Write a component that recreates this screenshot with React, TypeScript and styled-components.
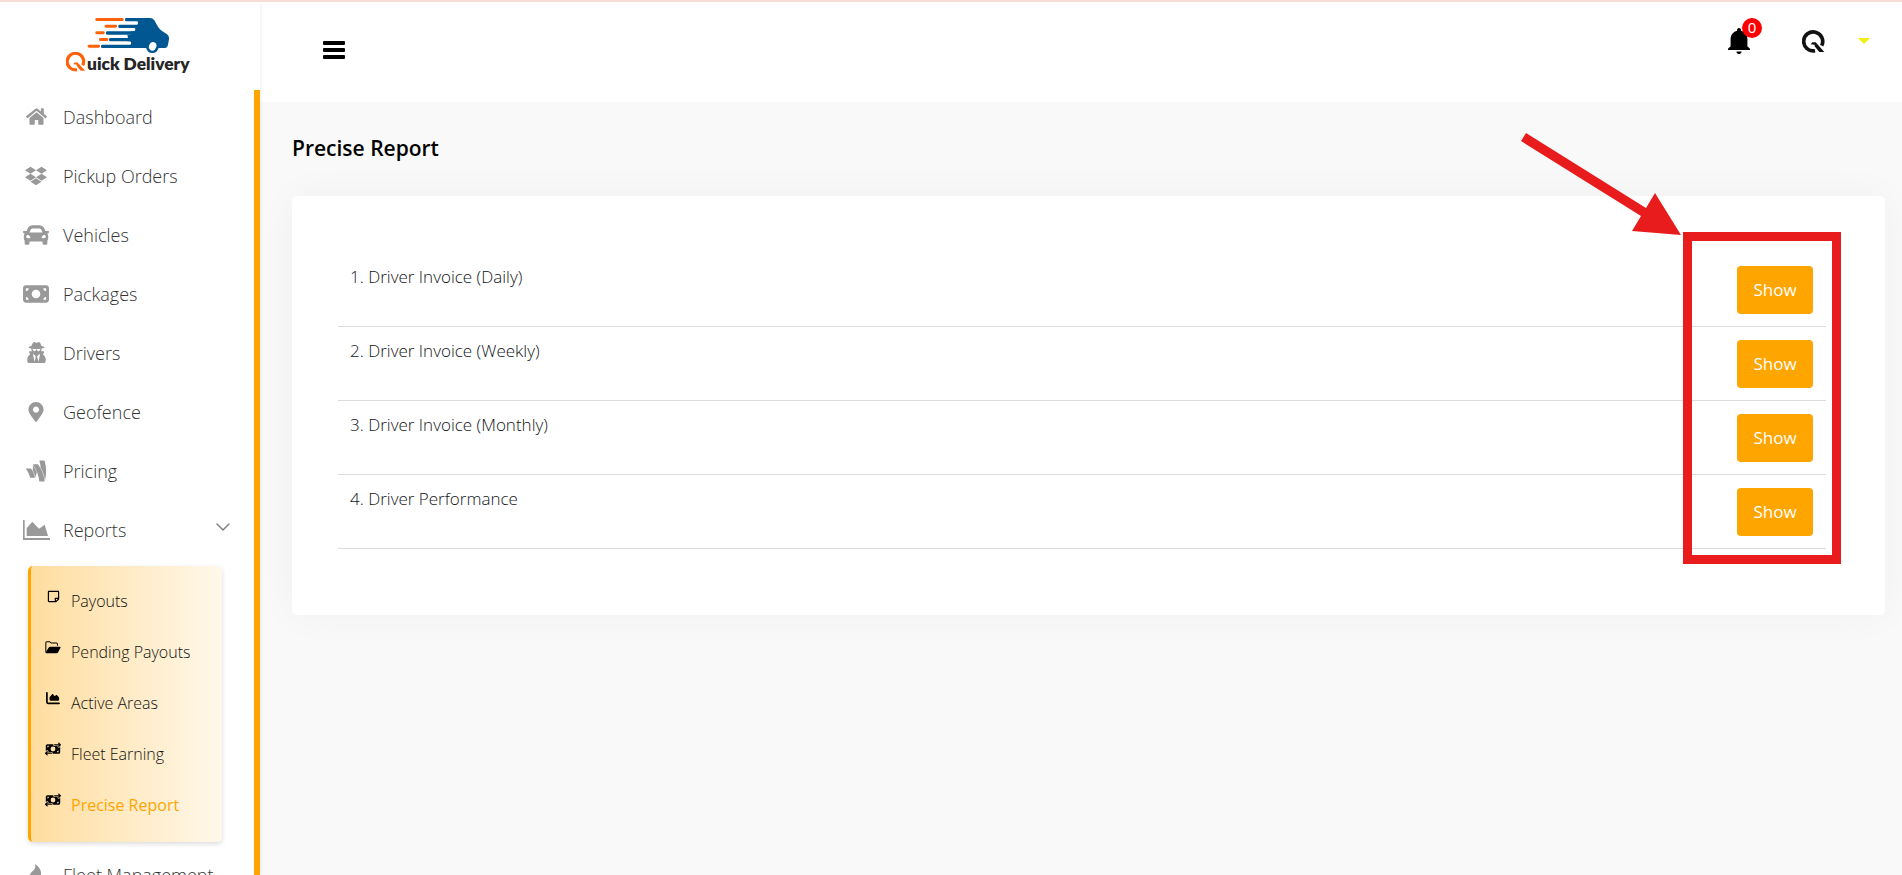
import React from "react";
import styled, { createGlobalStyle, css } from "styled-components";
import {
  FaHome,
  FaDropbox,
  FaCar,
  FaUserSecret,
  FaMapMarkerAlt,
  FaGoogleWallet,
  FaRegStickyNote,
} from "react-icons/fa";
import { FaMoneyBill, FaChartArea, FaMoneyBillTransfer } from "react-icons/fa6";
import { IoMdNotifications } from "react-icons/io";
import { BsChevronDown } from "react-icons/bs";

const orange = "#ffa500";

const GlobalStyle = createGlobalStyle`
  *, *::before, *::after { box-sizing: border-box; }
  body {
    margin: 0;
    background: #f9f9f9;
    color: #111417;
    font-family: "Open Sans", "Noto Sans", sans-serif;
    font-size: 17px;
    font-weight: 300;
    line-height: 24px;
  }
  button { font: inherit; cursor: pointer; }
  a { color: inherit; text-decoration: none; }
  ul { list-style: none; margin: 0; padding: 0; }
`;

const Page = styled.div`
  display: flex;
  height: 100vh;
  overflow: hidden;
  border-top: 2px solid #f6ddd5;
`;

const Sidebar = styled.aside`
  display: flex;
  flex-direction: column;
  flex: 0 0 260px;
  background: #fff;
  box-shadow: 0 0 4px rgba(0, 0, 0, 0.1);
  z-index: 1;
`;

const LogoLink = styled.a`
  flex: 0 0 88px;
  padding: 16px 0 0 66px;
`;

const NavScroll = styled.nav`
  flex: 1;
  min-height: 0;
  overflow: hidden;
  border-right: 6px solid ${orange};
`;

const NavLink = styled.a`
  display: flex;
  align-items: center;
  height: 59px;
  padding: 0 23px 6px 20px;
  gap: 11px;
  color: #333;
  font-size: 18px;
  white-space: nowrap;
`;

const NavIcon = styled.span<{ $size: number }>`
  display: flex;
  justify-content: center;
  width: 32px;
  color: #999;
  font-size: ${(p) => p.$size}px;
`;

const NavLabel = styled.span`
  flex: 1;
`;

const Chevron = styled(BsChevronDown)`
  color: #777;
  stroke: #777;
  stroke-width: 0.5px;
  font-size: 16px;
  margin-bottom: 6px;
`;

const SubMenu = styled.ul`
  margin: 4px 32px 6px 28px;
  padding: 9px 0 12px;
  border-left: 3px solid ${orange};
  border-radius: 5px;
  background: linear-gradient(to right, #ffdd9f, #fff8ea);
  box-shadow: 0 2px 5px rgba(0, 0, 0, 0.14);
`;

const SubLink = styled.a<{ $active?: boolean }>`
  display: flex;
  align-items: center;
  height: 51px;
  padding-left: 13px;
  gap: 9px;
  color: #111;
  font-size: 16px;
  white-space: nowrap;
  ${(p) =>
    p.$active &&
    css`
      color: ${orange};
      font-weight: 400;
    `}
`;

const SubIcon = styled.span<{ $size: number }>`
  display: flex;
  justify-content: center;
  width: 18px;
  padding-bottom: 9px;
  color: #000;
  font-size: ${(p) => p.$size}px;
`;

const Main = styled.div`
  flex: 1;
  min-width: 0;
`;

const Header = styled.header`
  display: flex;
  align-items: flex-start;
  justify-content: space-between;
  height: 100px;
  padding: 0 32px 0 60px;
  background: #fff;
`;

const IconButton = styled.button`
  display: flex;
  align-items: center;
  padding: 0;
  border: 0;
  background: none;
  color: #000;
`;

const MenuButton = styled(IconButton)`
  margin: 39px 0 0 3px;
`;

const HeaderTools = styled.div`
  display: flex;
  align-items: center;
  margin-top: 23px;
`;

const BellButton = styled(IconButton)`
  position: relative;
  margin-right: 47px;
  font-size: 32px;
`;

const Badge = styled.span`
  position: absolute;
  top: -7px;
  right: -7px;
  width: 20px;
  height: 20px;
  border-radius: 50%;
  background: #f00;
  color: #fff;
  font-family: "Noto Sans", sans-serif;
  font-size: 15px;
  font-weight: 400;
  line-height: 19px;
  text-align: center;
`;

const AccountButton = styled(IconButton)`
  gap: 33px;
`;

const Caret = styled.span`
  border: 6px solid transparent;
  border-top-color: #f3ef12;
  border-bottom: 0;
`;

const Content = styled.main`
  padding: 32px 17px 0 32px;
`;

const Title = styled.h1`
  margin: 0 0 34px;
  color: #000;
  font-size: 21px;
  font-weight: 600;
  line-height: 28px;
`;

const Panel = styled.section`
  position: relative;
  padding: 57px 59px 66px 46px;
  border-radius: 5px;
  background: #fff;
  box-shadow: 0 0 40px rgba(0, 0, 0, 0.04);
`;

const ReportTable = styled.table`
  width: 100%;
  border-collapse: collapse;
`;

const Cell = styled.td<{ $action?: boolean }>`
  padding: ${(p) => (p.$action ? "13px 13px 12px" : "12px 12px")};
  border-bottom: 1px solid #dcdcdc;
  text-align: ${(p) => (p.$action ? "right" : "left")};
  vertical-align: top;
`;

const ShowButton = styled.button`
  display: inline-block;
  width: 76px;
  height: 48px;
  padding: 0;
  border: 0;
  border-radius: 4px;
  background: ${orange};
  color: #fff;
  font-weight: 400;
  vertical-align: top;
`;

const Highlight = styled.div`
  position: absolute;
  top: 36px;
  right: 44px;
  width: 158px;
  height: 332px;
  border: 9px solid #e81c1c;
  pointer-events: none;
`;

const Arrow = styled.svg`
  position: absolute;
  top: -63px;
  right: 204px;
  pointer-events: none;
`;

const LogoWord = styled.text`
  font-family: Lato, sans-serif;
  font-size: 52px;
  font-weight: 800;
`;

function QMark({ size, color, x, y }: { size: number; color: string; x?: number; y?: number }) {
  return (
    <svg x={x} y={y} width={size} height={size} viewBox="0 0 69 69">
      <path d="M39 62.100A28.500 28.500 0 1 1 59 47" fill="none" stroke={color} strokeWidth="11" />
      <path d="M26 43 31 37H41L67 66H52L38 49V44Z" fill={color} />
    </svg>
  );
}

function Logo() {
  return (
    <svg width="126" height="60" viewBox="198 54 378 180" role="img" aria-label="Quick Delivery">
      <g fill="#ff6108">
        <rect x="286" y="54" width="85" height="9" rx="4" />
        <rect x="314" y="74" width="37" height="9" rx="4" />
        <rect x="286" y="94" width="28" height="9" rx="4" />
        <rect x="297" y="114" width="28" height="9" rx="4" />
        <rect x="263" y="134" width="37" height="9" rx="4" />
      </g>
      <g fill="#005792">
        <rect x="375" y="54" width="50" height="10" rx="4" />
        <rect x="355" y="74" width="70" height="10" rx="4" />
        <rect x="318" y="94" width="105" height="10" rx="4" />
        <rect x="327" y="114" width="95" height="10" rx="4" />
        <rect x="303" y="134" width="120" height="10" rx="4" />
        <path d="M412 54H450Q458 54 463 61L474 80Q479 88 485 92L500 102Q508 107 507 118L504 134Q502 144 492 144H392V134Q396 124 388 124H382Q386 104 380 104H392V94H404Q409 84 402 84H412V74Q418 64 409 64H412Z" />
        <circle cx="457" cy="140" r="19" />
      </g>
      <ellipse cx="458" cy="139" rx="11" ry="13" fill="#fff" transform="rotate(20 458 139)" />
      <QMark size={60} color="#ff6108" x={197} y={155} />
      <LogoWord x="261" y="211" fill="#252525">
        uick Delivery
      </LogoWord>
    </svg>
  );
}

/* Thin-axis area chart for the Reports entry */
function ReportsIcon() {
  return (
    <svg width="27" height="20" viewBox="0 0 81 60" fill="currentColor">
      <path d="M0 0H5V54H81V60H0Z" />
      <path d="M11 48V25L28 5 48 26 65 14 75 48Z" />
    </svg>
  );
}

function FlameIcon() {
  return (
    <svg width="16" height="22" viewBox="0 0 48 66" fill="currentColor">
      <path d="M21 0C34 8 41 20 39 32Q38 37 41 38Q46 64 24 66Q0 64 3 38Q6 26 17 19Q24 12 21 0Z" />
    </svg>
  );
}

function FolderIcon() {
  return (
    <svg width="16" height="13" viewBox="0 0 46 38">
      <path d="M2 33V5Q2 2 5 2H13L18 6H33Q36 6 36 9V14" fill="none" stroke="#000" strokeWidth="3" />
      <path d="M15 17H43Q46 17 45 20L38 33Q37 36 33 36H3Q0 36 2 33L10 20Q12 17 15 17Z" />
    </svg>
  );
}

function MenuIcon() {
  return (
    <svg width="22" height="18" viewBox="0 0 22 18">
      <path d="M1 0H21Q22 0 22 1V3Q22 4 21 4H1Q0 4 0 3V1Q0 0 1 0ZM1 7H21Q22 7 22 8V10Q22 11 21 11H1Q0 11 0 10V8Q0 7 1 7ZM1 14H21Q22 14 22 15V17Q22 18 21 18H1Q0 18 0 17V15Q0 14 1 14Z" />
    </svg>
  );
}

const navItems = [
  { label: "Dashboard", icon: <FaHome />, size: 21 },
  { label: "Pickup Orders", icon: <FaDropbox />, size: 22 },
  { label: "Vehicles", icon: <FaCar />, size: 26 },
  { label: "Packages", icon: <FaMoneyBill />, size: 26 },
  { label: "Drivers", icon: <FaUserSecret />, size: 21 },
  { label: "Geofence", icon: <FaMapMarkerAlt />, size: 20 },
  { label: "Pricing", icon: <FaGoogleWallet />, size: 24 },
  { label: "Reports", icon: <ReportsIcon />, size: 24, open: true },
];

const reportItems = [
  { label: "Payouts", icon: <FaRegStickyNote />, size: 13 },
  { label: "Pending Payouts", icon: <FolderIcon />, size: 14 },
  { label: "Active Areas", icon: <FaChartArea />, size: 14 },
  { label: "Fleet Earning", icon: <FaMoneyBillTransfer />, size: 16 },
  { label: "Precise Report", icon: <FaMoneyBillTransfer />, size: 16, active: true },
];

const reports = [
  "Driver Invoice (Daily)",
  "Driver Invoice (Weekly)",
  "Driver Invoice (Monthly)",
  "Driver Performance",
];

export default function App() {
  return (
    <>
      <GlobalStyle />
      <Page>
        <Sidebar>
          <LogoLink href="#">
            <Logo />
          </LogoLink>
          <NavScroll>
            {navItems.map((item) => (
              <NavLink key={item.label} href="#">
                <NavIcon $size={item.size}>{item.icon}</NavIcon>
                <NavLabel>{item.label}</NavLabel>
                {item.open && <Chevron />}
              </NavLink>
            ))}
            <SubMenu>
              {reportItems.map((item) => (
                <li key={item.label}>
                  <SubLink href="#" $active={item.active}>
                    <SubIcon $size={item.size}>{item.icon}</SubIcon>
                    {item.label}
                  </SubLink>
                </li>
              ))}
            </SubMenu>
            <NavLink href="#">
              <NavIcon $size={22}>
                <FlameIcon />
              </NavIcon>
              <NavLabel>Fleet Management</NavLabel>
            </NavLink>
          </NavScroll>
        </Sidebar>
        <Main>
          <Header>
            <MenuButton aria-label="Toggle menu">
              <MenuIcon />
            </MenuButton>
            <HeaderTools>
              <BellButton aria-label="Notifications">
                <IoMdNotifications />
                <Badge>0</Badge>
              </BellButton>
              <AccountButton aria-label="Account">
                <QMark size={23} color="#111" />
                <Caret />
              </AccountButton>
            </HeaderTools>
          </Header>
          <Content>
            <Title>Precise Report</Title>
            <Panel>
              <ReportTable>
                <tbody>
                  {reports.map((name, i) => (
                    <tr key={name}>
                      <Cell>
                        {i + 1}. {name}
                      </Cell>
                      <Cell $action>
                        <ShowButton>Show</ShowButton>
                      </Cell>
                    </tr>
                  ))}
                </tbody>
              </ReportTable>
              <Highlight />
              <Arrow width="160" height="102" viewBox="0 0 160 102" fill="#e81c1c">
                <path d="M0 8 5 0 125 75 134 60 160 102 111 98 120 83Z" />
              </Arrow>
            </Panel>
          </Content>
        </Main>
      </Page>
    </>
  );
}
